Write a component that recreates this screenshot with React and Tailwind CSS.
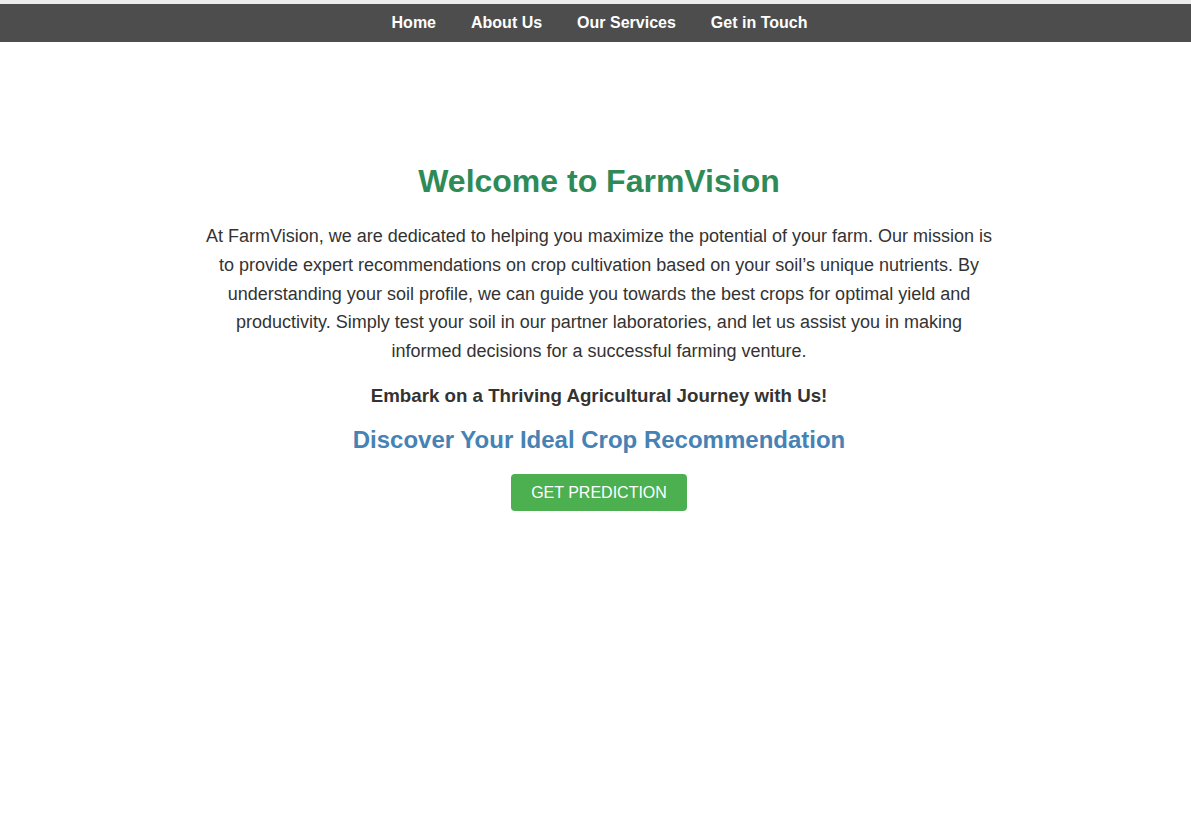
import React from "react";

const links = ["Home", "About Us", "Our Services", "Get in Touch"];

const App = () => {
  return (
    <div className="min-h-screen bg-white font-['Liberation_Sans',Arial,sans-serif]">
      <div className="h-[4px] bg-[#ececec]" />
      <nav className="flex h-[38px] items-center justify-center gap-[35px] bg-[#4d4d4d] pl-[8px]">
        {links.map((l) => (
          <a key={l} href="#" className="text-[16px] font-bold text-white">
            {l}
          </a>
        ))}
      </nav>

      <div className="pl-[7px]">
        <main className="mx-auto flex max-w-[800px] flex-col items-center pt-[119px] text-center">
          <h1 className="text-[32px] font-bold leading-[40px] text-[#2e8b57]">
            Welcome to FarmVision
          </h1>
          <p className="mt-[21px] text-[18px] leading-[28.8px] text-[#333]">
            At FarmVision, we are dedicated to helping you maximize the
            potential of your farm. Our mission is to provide expert
            recommendations on crop cultivation based on your soil’s unique
            nutrients. By understanding your soil profile, we can guide you
            towards the best crops for optimal yield and productivity. Simply
            test your soil in our partner laboratories, and let us assist you
            in making informed decisions for a successful farming venture.
          </p>
          <h3 className="mt-[19px] text-[18.72px] font-bold leading-[22px] text-[#333]">
            Embark on a Thriving Agricultural Journey with Us!
          </h3>
          <h2 className="mt-[19px] text-[24px] font-bold leading-[28px] text-[#4682b4]">
            Discover Your Ideal Crop Recommendation
          </h2>
          <button className="mt-[20px] rounded-[4px] bg-[#4caf50] px-[20px] py-[9px] text-[16px] leading-[19px] text-white">
            GET PREDICTION
          </button>
        </main>
      </div>
    </div>
  );
};

export default App;
